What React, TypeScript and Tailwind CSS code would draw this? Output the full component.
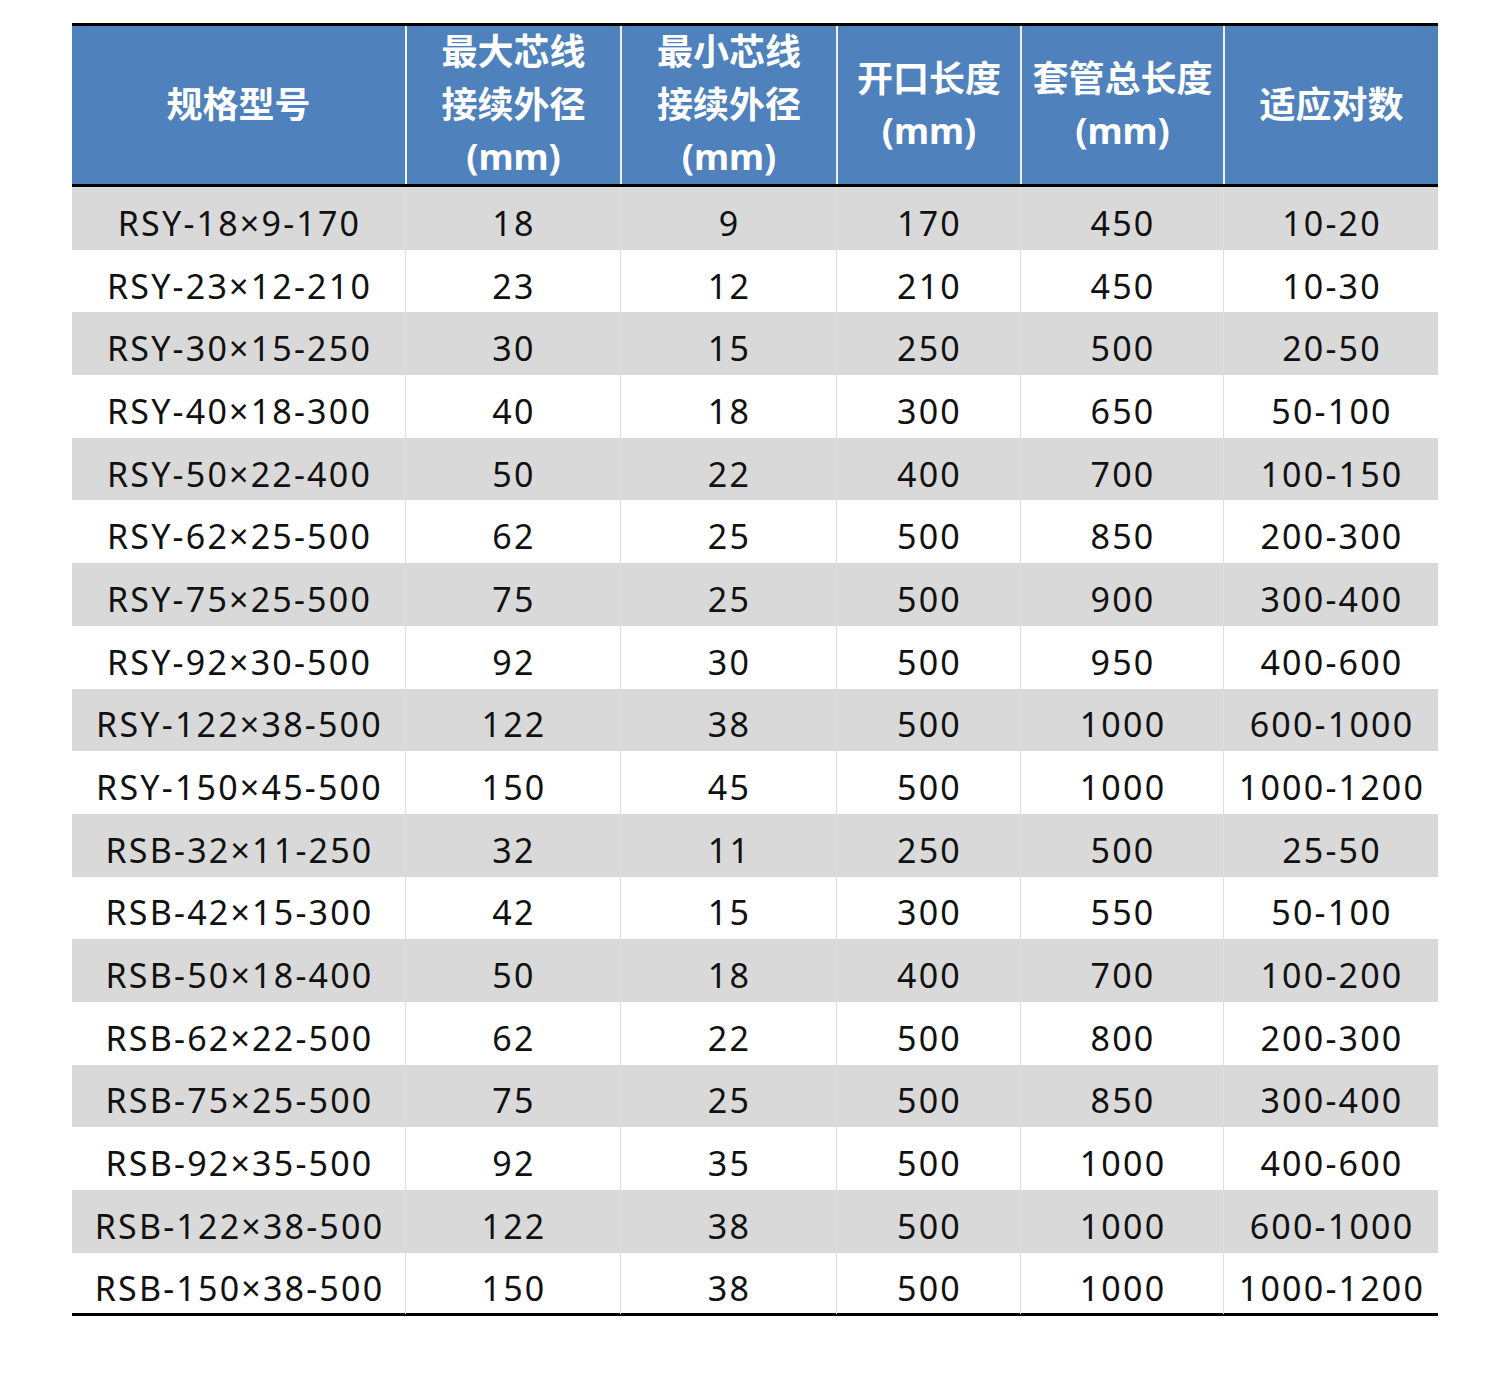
const headers: string[][] = [
  ["规格型号"],
  ["最大芯线", "接续外径", "(mm)"],
  ["最小芯线", "接续外径", "(mm)"],
  ["开口长度", "(mm)"],
  ["套管总长度", "(mm)"],
  ["适应对数"],
];

const rows: string[][] = [
  ["RSY-18×9-170", "18", "9", "170", "450", "10-20"],
  ["RSY-23×12-210", "23", "12", "210", "450", "10-30"],
  ["RSY-30×15-250", "30", "15", "250", "500", "20-50"],
  ["RSY-40×18-300", "40", "18", "300", "650", "50-100"],
  ["RSY-50×22-400", "50", "22", "400", "700", "100-150"],
  ["RSY-62×25-500", "62", "25", "500", "850", "200-300"],
  ["RSY-75×25-500", "75", "25", "500", "900", "300-400"],
  ["RSY-92×30-500", "92", "30", "500", "950", "400-600"],
  ["RSY-122×38-500", "122", "38", "500", "1000", "600-1000"],
  ["RSY-150×45-500", "150", "45", "500", "1000", "1000-1200"],
  ["RSB-32×11-250", "32", "11", "250", "500", "25-50"],
  ["RSB-42×15-300", "42", "15", "300", "550", "50-100"],
  ["RSB-50×18-400", "50", "18", "400", "700", "100-200"],
  ["RSB-62×22-500", "62", "22", "500", "800", "200-300"],
  ["RSB-75×25-500", "75", "25", "500", "850", "300-400"],
  ["RSB-92×35-500", "92", "35", "500", "1000", "400-600"],
  ["RSB-122×38-500", "122", "38", "500", "1000", "600-1000"],
  ["RSB-150×38-500", "150", "38", "500", "1000", "1000-1200"],
];

const cols = "grid grid-cols-[333px_215px_216px_184px_203px_215px]";

export default function App() {
  return (
    <div className="w-[1500px] h-[1388px] bg-white pt-[23px] pl-[72px]">
      <div className="w-[1366px] border-t-[3px] border-black">
        <div className={`${cols} bg-[#4f81bd] h-[161px] border-b-[3px] border-black`}>
          {headers.map((h, i) => (
            <div
              key={i}
              className={`flex flex-col items-center justify-center text-white font-bold text-[36px] leading-[52.5px] font-['Noto_Sans','Noto_Sans_CJK_SC',sans-serif] ${i > 0 ? "border-l-2 border-white/90" : ""}`}
            >
              {h.map((line, j) => (
                <span key={j}>{line}</span>
              ))}
            </div>
          ))}
        </div>
        {rows.map((r, i) => (
          <div
            key={i}
            className={`${cols} ${i === rows.length - 1 ? "h-[60px]" : "h-[62.7px]"} ${i % 2 === 0 ? "bg-[#d9d9d9]" : "bg-white"}`}
          >
            {r.map((c, j) => (
              <div
                key={j}
                className={`flex items-center justify-center pt-[10px] pl-[2px] text-[34px] tracking-[2.2px] text-[#111] font-['Noto_Sans',sans-serif] ${j > 0 ? "border-l border-[#dedede]" : ""}`}
              >
                {c}
              </div>
            ))}
          </div>
        ))}
        <div className="border-t-[3px] border-black" />
      </div>
    </div>
  );
}
